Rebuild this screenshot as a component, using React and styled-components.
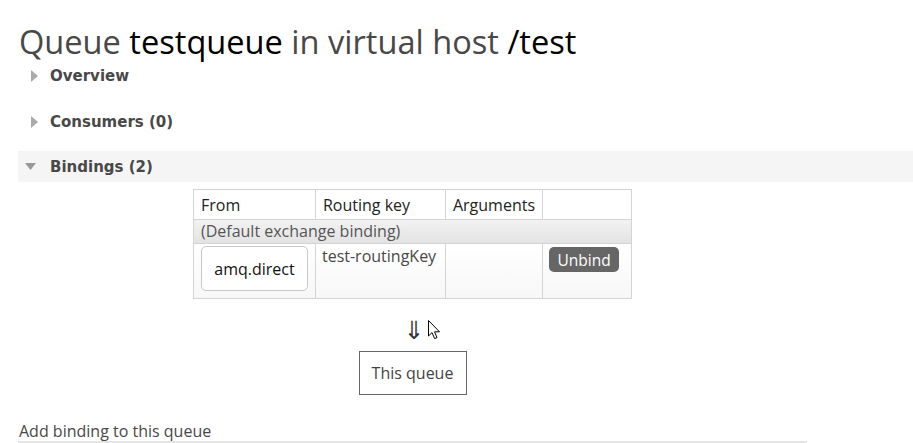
import React from "react";
import styled, { createGlobalStyle } from "styled-components";

const Global = createGlobalStyle`
  html, body { margin: 0; padding: 0; background: #fff; }
  body { font-family: "Open Sans", "Noto Sans", sans-serif; color: #484848; }
`;

const Page = styled.div`
  padding: 22px 0 0 18px;
  width: 895px;
  overflow: hidden;
`;

const Title = styled.h1`
  margin: 0 0 0 1px;
  font-family: "Open Sans", sans-serif;
  font-weight: 400;
  font-size: 32.6px;
  line-height: 40px;
  color: #484848;
  white-space: nowrap;
`;

const Em = styled.span`
  color: #000;
`;

const SectionHead = styled.div`
  display: flex;
  align-items: center;
  height: 31px;
  margin-top: ${(p) => p.$mt}px;
  background: ${(p) => (p.$open ? "#f5f5f5" : "transparent")};
  font-family: "DejaVu Sans", Verdana, sans-serif;
  font-weight: 700;
  font-size: 15px;
  color: #484848;
`;

const Arrow = styled.span`
  width: 32px;
  display: flex;
  padding-left: ${(p) => (p.$open ? 7 : 13)}px;
  box-sizing: border-box;
`;

const Body = styled.div`
  width: 789px;
  display: flex;
  flex-direction: column;
  align-items: center;
  padding-top: 7px;
`;

const Table = styled.table`
  border-collapse: collapse;
  font-size: 16px;
`;

const Th = styled.th`
  border: 1px solid #d4d4d4;
  text-align: left;
  font-weight: 400;
  color: #222;
  height: 30px;
  padding: 0 7px;
  width: ${(p) => p.$w}px;
  box-sizing: border-box;
`;

const GroupRow = styled.tr`
  background: linear-gradient(#f2f2f2, #e2e2e2);
`;

const GroupCell = styled.td`
  border: 1px solid #d4d4d4;
  padding: 0 7px;
  height: 23px;
  line-height: 21px;
  color: #555;
`;

const DataRow = styled.tr`
  background: linear-gradient(#ffffff, #f7f7f7);
`;

const Td = styled.td`
  border: 1px solid #d4d4d4;
  vertical-align: top;
  padding: ${(p) => p.$pad || "1px 6px"};
  height: 55px;
  line-height: 22px;
  box-sizing: border-box;
  color: #484848;
`;

const ExchangeBox = styled.div`
  width: 107px;
  height: 45px;
  box-sizing: border-box;
  border: 1px solid #c8c8c8;
  border-radius: 5px;
  background: #fff;
  display: flex;
  align-items: center;
  justify-content: center;
  color: #111;
`;

const Unbind = styled.button`
  font-family: "Open Sans", sans-serif;
  font-size: 15.5px;
  background: #666;
  color: #fff;
  border: none;
  border-radius: 5px;
  height: 25px;
  width: 70px;
  padding: 0;
  margin-top: 1px;
  cursor: pointer;
`;

const FlowArrow = styled.div`
  margin-top: 17px;
  height: 28px;
  display: flex;
  align-items: center;
  gap: 4px;
  margin-left: 20px;
  font-family: "DejaVu Sans", sans-serif;
  font-size: 25px;
  color: #333;
`;

const QueueBox = styled.div`
  margin-top: 7px;
  width: 108px;
  height: 44px;
  box-sizing: border-box;
  border: 1px solid #666;
  display: flex;
  align-items: center;
  justify-content: center;
  font-size: 16px;
  color: #444;
`;

const SubHead = styled.div`
  margin-top: 26px;
  width: 789px;
  font-size: 16px;
  line-height: 20px;
  color: #484848;
  padding-left: 1px;
  box-sizing: border-box;
  border-bottom: 2px solid #e4e4e4;
`;

const TriRight = () => (
  <svg width="7" height="12" viewBox="0 0 7 12">
    <path d="M0 0 L7 6 L0 12 Z" fill="#aaa" />
  </svg>
);

const TriDown = () => (
  <svg width="11" height="7" viewBox="0 0 11 7">
    <path d="M0 0 L11 0 L5.5 7 Z" fill="#999" />
  </svg>
);

const Cursor = () => (
  <svg width="13" height="20" viewBox="0 0 13 20">
    <path
      d="M0.5 0.5 L0.5 16 L4 12.6 L6.6 18.6 L9 17.6 L6.5 11.8 L11.5 11.8 Z"
      fill="#fff"
      stroke="#000"
      strokeWidth="1"
      strokeLinejoin="miter"
    />
  </svg>
);

export default function App() {
  return (
    <>
      <Global />
      <Page>
        <Title>
          Queue <Em>testqueue</Em> in virtual host <Em>/test</Em>
        </Title>
        <SectionHead $mt={-2}>
          <Arrow>
            <TriRight />
          </Arrow>
          Overview
        </SectionHead>
        <SectionHead $mt={15}>
          <Arrow>
            <TriRight />
          </Arrow>
          Consumers (0)
        </SectionHead>
        <SectionHead $mt={14} $open>
          <Arrow $open>
            <TriDown />
          </Arrow>
          Bindings (2)
        </SectionHead>
        <Body>
          <Table>
            <thead>
              <tr>
                <Th $w={122}>From</Th>
                <Th $w={130}>Routing key</Th>
                <Th $w={96}>Arguments</Th>
                <Th $w={89}></Th>
              </tr>
            </thead>
            <tbody>
              <GroupRow>
                <GroupCell colSpan={4}>(Default exchange binding)</GroupCell>
              </GroupRow>
              <DataRow>
                <Td $pad="2px 7px">
                  <ExchangeBox>amq.direct</ExchangeBox>
                </Td>
                <Td>test-routingKey</Td>
                <Td></Td>
                <Td $pad="2px 6px">
                  <Unbind>Unbind</Unbind>
                </Td>
              </DataRow>
            </tbody>
          </Table>
          <FlowArrow>
            <span>⇓</span>
            <Cursor />
          </FlowArrow>
          <QueueBox>This queue</QueueBox>
        </Body>
        <SubHead>Add binding to this queue</SubHead>
      </Page>
    </>
  );
}
